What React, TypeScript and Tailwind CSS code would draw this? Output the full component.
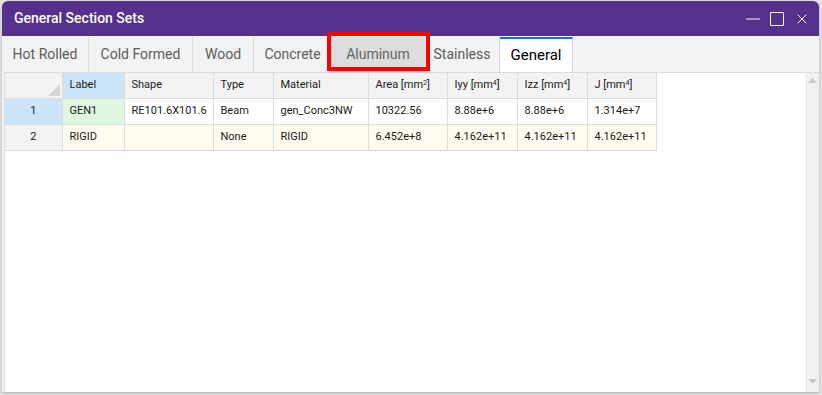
import { X } from "lucide-react";

const tabs = [
  { label: "Hot Rolled", w: "w-[87px]" },
  { label: "Cold Formed", w: "w-[104px]" },
  { label: "Wood", w: "w-[61px]" },
  { label: "Concrete", w: "w-[78px]" },
  { label: "Aluminum", w: "w-[93px]" },
  { label: "Stainless", w: "w-[75px]" },
  { label: "General", w: "w-[73px]" },
];

const cols = [
  { key: "label", head: <>Label</>, w: "w-[62px]" },
  { key: "shape", head: <>Shape</>, w: "w-[89px]" },
  { key: "type", head: <>Type</>, w: "w-[60px]" },
  { key: "material", head: <>Material</>, w: "w-[95px]" },
  { key: "area", head: <>Area [mm<sup className="text-[7px]">2</sup>]</>, w: "w-[79px]" },
  { key: "iyy", head: <>Iyy [mm<sup className="text-[7px]">4</sup>]</>, w: "w-[70px]" },
  { key: "izz", head: <>Izz [mm<sup className="text-[7px]">4</sup>]</>, w: "w-[70px]" },
  { key: "j", head: <>J [mm<sup className="text-[7px]">4</sup>]</>, w: "w-[69px]" },
];

const rows: Record<string, string>[] = [
  {
    label: "GEN1",
    shape: "RE101.6X101.6",
    type: "Beam",
    material: "gen_Conc3NW",
    area: "10322.56",
    iyy: "8.88e+6",
    izz: "8.88e+6",
    j: "1.314e+7",
  },
  {
    label: "RIGID",
    shape: "",
    type: "None",
    material: "RIGID",
    area: "6.452e+8",
    iyy: "4.162e+11",
    izz: "4.162e+11",
    j: "4.162e+11",
  },
];

export default function App() {
  return (
    <div className="w-[822px] h-[395px] bg-[#e4e4e4] pl-[2px] pt-[1px] font-['Roboto',sans-serif] overflow-hidden">
      <div className="relative w-[817px] h-[391px] bg-white flex flex-col rounded-t-[6px] overflow-hidden shadow-[0_1px_3px_rgba(0,0,0,0.25)]">
        {/* title bar */}
        <div className="h-[35px] shrink-0 bg-[#55308c] flex items-center justify-between pl-[12px] pr-[9px]">
          <span className="text-white text-[14px] font-medium">General Section Sets</span>
          <div className="flex items-center gap-[10px]">
            <div className="w-[14px] h-[14px] flex items-center">
              <div className="w-[14px] h-[2px] bg-[#a892c8]" />
            </div>
            <div className="w-[14px] h-[14px] border-[1.5px] border-white rounded-[1px]" />
            <X className="w-[16px] h-[16px] text-white" strokeWidth={1.5} />
          </div>
        </div>

        {/* tabs */}
        <div className="h-[36px] shrink-0 bg-[#f3f3f3] pt-[1px] flex">
          {tabs.map((t) => {
            const active = t.label === "General";
            const hover = t.label === "Aluminum";
            return (
              <div
                key={t.label}
                className={`${t.w} h-[35px] flex items-center justify-center border-r border-[#dcdcdc] text-[14px] ${
                  active
                    ? "bg-white text-black text-[15px] border-t-2 border-t-[#1a6fc9]"
                    : hover
                    ? "bg-[#dcdcdc] text-[#666]"
                    : "text-[#5c5c5c]"
                }`}
              >
                {t.label}
              </div>
            );
          })}
        </div>

        {/* content */}
        <div className="flex-1 flex bg-[#f3f3f3] pl-[2px]">
          <div className="flex-1 flex bg-white border-l border-t border-[#dcdcdc]">
            <div className="flex-1">
              <table className="table-fixed border-collapse text-[11px] text-[#1a1a1a]">
                <thead>
                  <tr className="h-[25px]">
                    <th className="w-[57px] bg-[#f3f3f3] border border-t-0 border-l-0 border-[#dcdcdc] relative p-0">
                      <svg className="absolute right-[2px] bottom-[2px]" width="12" height="12" viewBox="0 0 12 12">
                        <polygon points="12,0 12,12 0,12" fill="#d6d6d6" />
                      </svg>
                    </th>
                    {cols.map((c) => (
                      <th
                        key={c.key}
                        className={`${c.w} border border-t-0 border-[#dcdcdc] text-left font-normal pl-[7px] whitespace-nowrap ${
                          c.key === "label" ? "bg-[#cce4f7]" : "bg-[#f3f3f3]"
                        }`}
                      >
                        {c.head}
                      </th>
                    ))}
                  </tr>
                </thead>
                <tbody>
                  {rows.map((r, i) => (
                    <tr key={i} className="h-[26px]">
                      <td
                        className={`border border-l-0 border-[#dcdcdc] text-center ${
                          i === 0 ? "bg-[#cce4f7]" : "bg-[#f3f3f3]"
                        }`}
                      >
                        {i + 1}
                      </td>
                      {cols.map((c) => (
                        <td
                          key={c.key}
                          className={`border border-[#dcdcdc] pl-[7px] whitespace-nowrap ${
                            i === 1
                              ? "bg-[#fffcef]"
                              : c.key === "label"
                              ? "bg-[#dff6df]"
                              : "bg-white"
                          }`}
                        >
                          {r[c.key]}
                        </td>
                      ))}
                    </tr>
                  ))}
                </tbody>
              </table>
            </div>
            {/* scrollbar */}
            <div className="w-[14px] bg-[#f1f1f1] flex flex-col items-center justify-between pt-[5px] pb-[8px]">
              <svg width="9" height="5" viewBox="0 0 9 5">
                <polygon points="4.5,0 9,5 0,5" fill="#c8c8c8" />
              </svg>
              <svg width="9" height="5" viewBox="0 0 9 5">
                <polygon points="0,0 9,0 4.5,5" fill="#c8c8c8" />
              </svg>
            </div>
          </div>
        </div>

        {/* highlight box */}
        <div className="absolute left-[325px] top-[31px] w-[103px] h-[39px] border-[4px] border-[#ff0000]" />
      </div>
    </div>
  );
}
